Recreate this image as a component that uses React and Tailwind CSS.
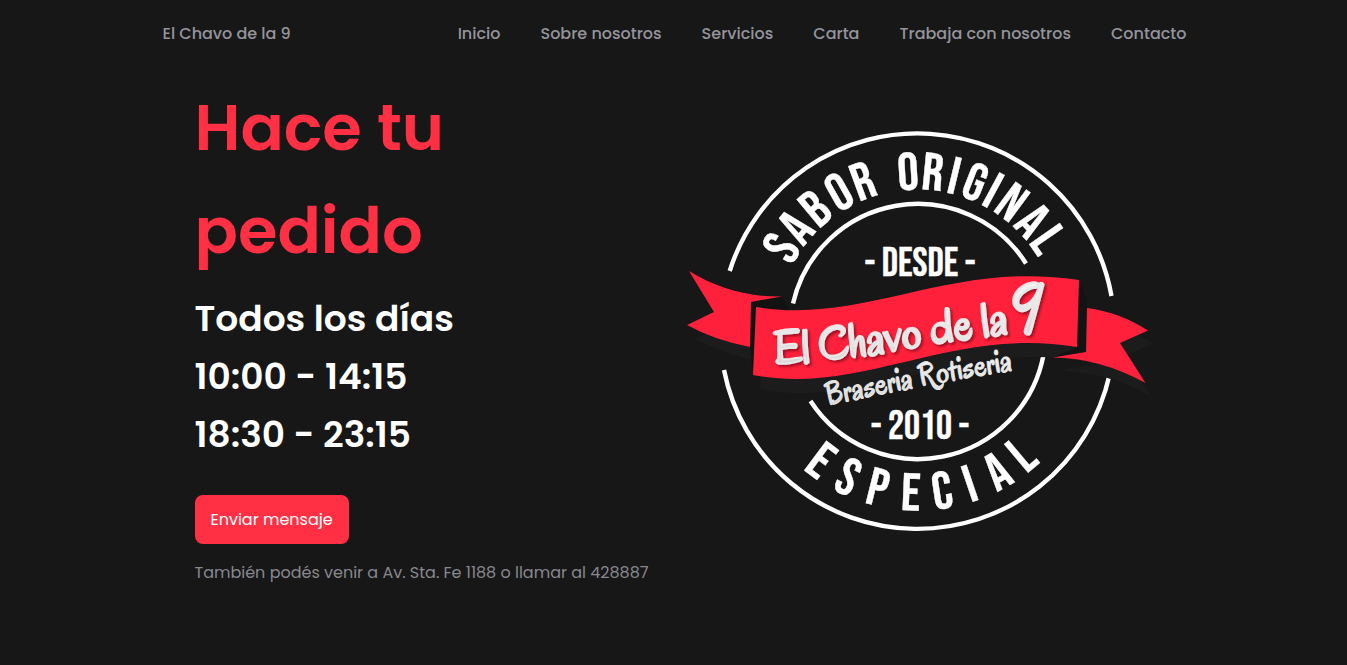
const links = ["Inicio", "Sobre nosotros", "Servicios", "Carta", "Trabaja con nosotros", "Contacto"];

// Letter angles on the ring, in degrees from the vertical.
const TOP_RADIUS = 141;
const BOTTOM_RADIUS = 180;
const saborAngles = [-58.7, -49.7, -39.9, -29.6, -20.2];
const originalAngles = [-3.5, 5.5, 13.4, 21.2, 28.3, 36.3, 46.3, 55.1];
const especialAngles = [-36.6, -25.4, -14.1, -2.4, 8.7, 18.8, 29.5, 40.1];

const alongArc = (angles, radius) =>
  angles.map((a) => (((a + 90) * Math.PI * radius) / 180).toFixed(1)).join(" ");

const ribbon = "M756 307 C866 325 950 260 1079 280 L1077 347 C950 326 862 396 753 375 Z";
const leftTail = "M689 271 C715 287 745 297 782 296.5 Q766 299 751 302 L750 347 Q714 340 687 325 L714 312 Z";
const rightTail = "M1087 308 Q1119 312 1148 330.5 L1120 343 L1145.5 383 Q1100 358 1053 357.5 L1086 352 Z";

function Logo() {
  return (
    <svg viewBox="675 91 480 480" className="w-[480px] max-w-full shrink-0" role="img" aria-label="El Chavo de la 9">
      <defs>
        <path id="ring-top" d="M776.5 330.5 A141 141 0 0 1 1058.5 330.5" />
        <path id="ring-bottom" d="M737.5 330.5 A180 180 0 0 0 1097.5 330.5" />
        <path id="name-line" d="M775 364 C850 362 930 342 1030 330" />
        <path id="sub-line" d="M828 405 Q920 385 1030 367" />
        <linearGradient id="silver" x1="0" y1="0" x2="0" y2="1">
          <stop offset="0" stopColor="#ffffff" />
          <stop offset="1" stopColor="#cfcfd1" />
        </linearGradient>
        <filter id="soft" x="-20%" y="-20%" width="140%" height="140%">
          <feDropShadow dx="2" dy="2" stdDeviation="1.5" floodColor="#5a0510" floodOpacity="0.6" />
        </filter>
      </defs>

      <g fill="none" stroke="#fff" strokeWidth="4.4">
        <path d="M729.7 271 A197 197 0 0 1 1111.5 296" />
        <path d="M724 370 A197 197 0 0 0 1109.5 375" />
        <path d="M793 303.5 A128 128 0 0 1 1026 263.5" />
        <path d="M810.5 401 A128 128 0 0 0 1043.5 355" />
      </g>

      <g fill="#fff" textAnchor="middle" className="font-['Bebas_Neue',sans-serif]">
        <g fontSize="53" stroke="#fff" strokeWidth="0.4">
          <text><textPath href="#ring-top"><tspan x={alongArc(saborAngles, TOP_RADIUS)}>SABOR</tspan></textPath></text>
          <text><textPath href="#ring-top"><tspan x={alongArc(originalAngles, TOP_RADIUS)}>ORIGINAL</tspan></textPath></text>
          <text><textPath href="#ring-bottom"><tspan x={alongArc(especialAngles, BOTTOM_RADIUS)}>ESPECIAL</tspan></textPath></text>
        </g>
        <g fontSize="40" stroke="#fff" strokeWidth="0.4">
          <text x="920" y="276">- DESDE -</text>
          <text x="920" y="439">- 2010 -</text>
        </g>
      </g>

      <g fill="#1c1c1c">
        <path d={ribbon} transform="translate(7 14)" />
        <path d={leftTail} transform="translate(8 14)" />
        <path d={rightTail} transform="translate(5 13)" />
      </g>
      <path d="M1112 315 L1117 315 L1116 318 Z" fill="#ddd" />
      <path d="M751 302 L782 296.5 L790 311 L756 307 L753 375 L750 347 Z" fill="#121212" />
      <path d="M1079 280 L1087 300 L1086 352 L1053 357.5 L1077 347 Z" fill="#131313" />
      <g fill="#ff213b">
        <path d={leftTail} />
        <path d={rightTail} />
        <path d={ribbon} />
      </g>

      <g fill="url(#silver)" stroke="#e8e8e8" strokeLinejoin="round" className="font-['Oregano',cursive]">
        <g filter="url(#soft)">
          <text fontSize="49" strokeWidth="2"><textPath href="#name-line">El Chavo de la</textPath></text>
          <text fontSize="68" strokeWidth="2.6" transform="translate(1015 333) rotate(-8)">9</text>
        </g>
        <text fontSize="32" strokeWidth="1"><textPath href="#sub-line">Braseria Rotiseria</textPath></text>
      </g>
    </svg>
  );
}

export default function App() {
  return (
    <div className="min-h-screen bg-[#171717] pl-0.5 font-[Poppins,sans-serif] text-base leading-[25px] text-white">
      <div className="mx-auto max-w-[1024px]">
        <header className="flex items-center justify-between pt-[21px] pb-[30px] font-medium text-[#94949c]">
          <a href="#inicio">El Chavo de la 9</a>
          <nav className="flex gap-10">
            {links.map((link) => (
              <a key={link} href="#inicio">{link}</a>
            ))}
          </nav>
        </header>

        <main id="inicio" className="flex items-center justify-between px-8">
          <section className="flex flex-col items-start">
            <h1 className="max-w-[320px] text-[64px] leading-[103px] font-semibold text-[#ff3044]">Hace tu pedido</h1>
            <div className="mt-2 text-4xl leading-[58px] font-semibold">
              <p>Todos los días</p>
              <p>10:00 - 14:15</p>
              <p>18:30 - 23:15</p>
            </div>
            <button type="button" className="mt-[31px] rounded-lg bg-[#ff3044] px-4 py-3">Enviar mensaje</button>
            <p className="mt-4 text-[#88888f]">También podés venir a Av. Sta. Fe 1188 o llamar al 428887</p>
          </section>
          <Logo />
        </main>
      </div>
    </div>
  );
}
